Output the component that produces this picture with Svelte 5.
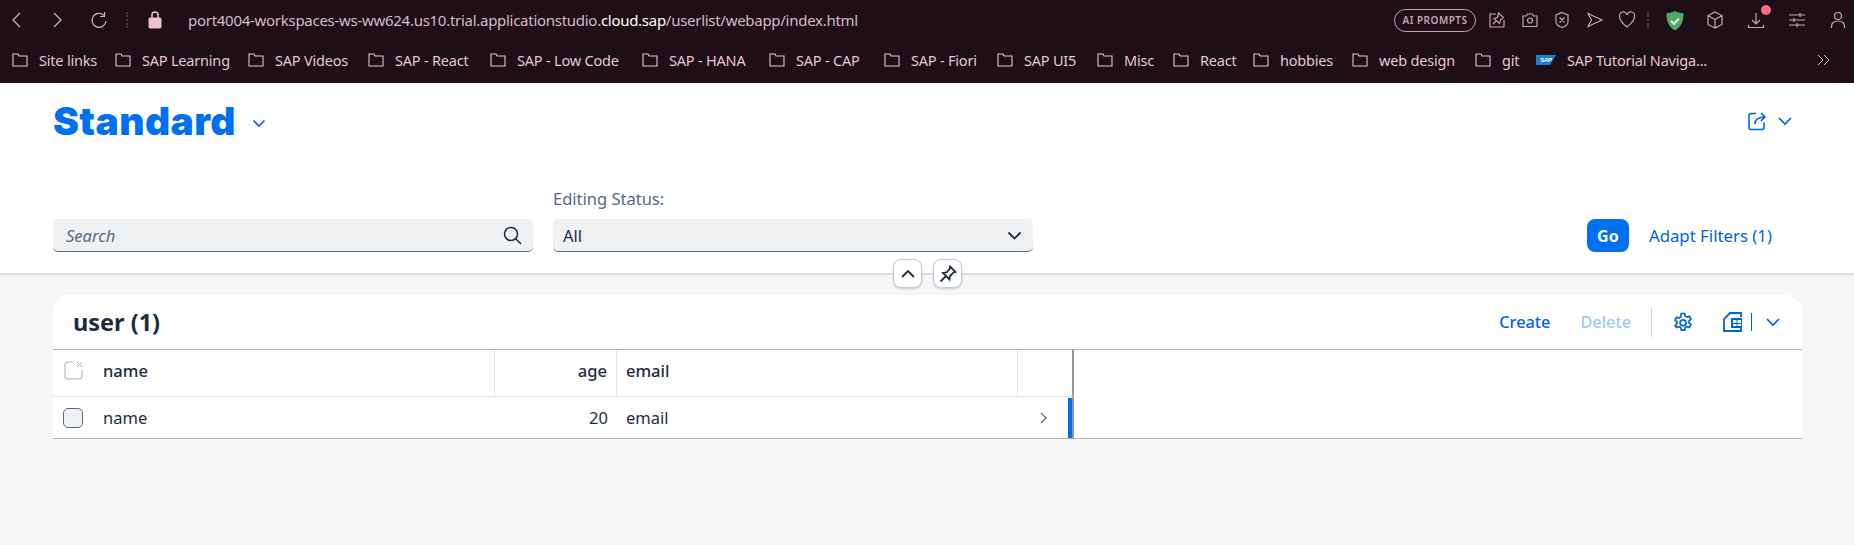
<script>
  const bookmarks = [
    ['Site links', 103], ['SAP Learning', 133], ['SAP Videos', 120], ['SAP - React', 122], ['SAP - Low Code', 152],
    ['SAP - HANA', 127], ['SAP - CAP', 115], ['SAP - Fiori', 113], ['SAP UI5', 100], ['Misc', 76], ['React', 80],
    ['hobbies', 99], ['web design', 123]
  ];
</script>

<div class="page">
  <div class="browser">
    <div class="addr">
      <svg class="nav first" width="18" height="18" viewBox="0 0 18 18"><path d="M12 2 5 9l7 7"/></svg>
      <svg class="nav second" width="18" height="18" viewBox="0 0 18 18"><path d="M6 2l7 7-7 7"/></svg>
      <svg class="nav third" width="20" height="20" viewBox="0 0 20 20"><path d="M15.500 6A7 7 0 1 0 17 11M15.500 2v4.500h-4.500"/></svg>
      <i class="dots"></i>
      <svg class="lock" width="14" height="18" viewBox="0 0 14 18"><rect x="1" y="7" width="12" height="10" rx="1" fill="#f0bfd0"/><path d="M4 7V4a3 3 0 0 1 6 0V7" fill="none" stroke="#f0bfd0" stroke-width="1.500"/></svg>
      <span class="url">port4004-workspaces-ws-ww624.us10.trial.applicationstudio.<b>cloud.sap</b>/userlist/webapp/index.html</span>
      <span class="grow"></span>
      <span class="ai">AI PROMPTS</span>
      <div class="tools one">
        <svg width="18" height="18" viewBox="0 0 18 18"><path d="M8 3H2v13h14V9M10.500 2l5 4.500-3 2.500-1 3.500-5.500-5 3.500-1zM5 13l3-3"/></svg>
        <svg width="18" height="18" viewBox="0 0 18 18"><path d="M2 5h3.500l1-2h5l1 2H16v10.500H2z"/><circle cx="9" cy="9.500" r="2.500"/></svg>
        <svg width="18" height="18" viewBox="0 0 18 18"><path d="M9 1.500l6 2.500v7c0 2.500-3 4.500-6 5.500-3-1-6-3-6-5.500V4zM6.500 6.500l5 5M11.500 6.500l-5 5"/></svg>
        <svg width="18" height="18" viewBox="0 0 18 18"><path d="M2 2.500l14 6.500-14 6.500 3.500-6.500z"/></svg>
        <svg width="18" height="18" viewBox="0 0 18 18"><path d="M9 16C4 12 1.500 9 1.500 5.500a3.700 3.700 0 0 1 7.500-1.500 3.700 3.700 0 0 1 7.500 1.500C16.500 9 14 12 9 16z"/></svg>
      </div>
      <i class="dots tdots"></i>
      <svg class="shield" width="20" height="21" viewBox="0 0 20 22"><path d="M10 1c3 1.500 6 2 9 2.500 0 8-2 14-9 18C3 17.500 1 11.500 1 3.500c3-.5 6-1 9-2.500z" fill="#51a861"/><path d="M6 11.500l3 3 5-5.500" fill="none" stroke="#fff" stroke-width="2"/></svg>
      <div class="tools two">
        <svg width="18" height="20" viewBox="0 0 18 20"><path d="M9 2l7 3.500v9L9 18l-7-3.500v-9zM2 5.500L9 9.500l7-4M9 9.500V18"/></svg>
        <span class="download">
          <svg width="18" height="20" viewBox="0 0 18 20"><path d="M9 3v11M5 10l4 4 4-4M1.500 15v2.500h15V15"/></svg>
          <em></em>
        </span>
        <svg width="18" height="18" viewBox="0 0 18 18"><path d="M1 4h16M1 9h16M1 14h16M12 2v4M6 7v4M9 12v4"/></svg>
        <svg width="18" height="20" viewBox="0 0 18 20"><circle cx="9" cy="6" r="3.500"/><path d="M2.500 18v-2c0-2.500 2.500-5 6.500-5s6.500 2.500 6.500 5v2"/></svg>
      </div>
    </div>
    <div class="marks">
      {#each bookmarks as [label, w]}
        <span class="mark" style="width:{w}px"><svg width="16" height="14" viewBox="0 0 16 14"><path d="M1 1h5l1 2h8v10H1z"/></svg>{label}</span>
      {/each}
      <span class="mark" style="width:61px"><svg width="16" height="14" viewBox="0 0 16 14"><path d="M1 1h5l1 2h8v10H1z"/></svg>git</span>
      <span class="mark"><i class="sap">SAP</i>SAP Tutorial Naviga...</span>
      <span class="grow"></span>
      <svg class="more" width="13" height="12" viewBox="0 0 13 12"><path d="M1 1l5 5-5 5M7 1l5 5-5 5"/></svg>
    </div>
  </div>

  <header class="head">
    <div class="title-row">
      <h1>Standard</h1>
      <svg class="chev title-chev" width="14" height="14" viewBox="0 0 14 14"><path d="M1.500 4.500l5.500 5.500 5.500-5.500"/></svg>
      <span class="grow"></span>
      <svg class="share" width="20" height="20" viewBox="0 0 20 20"><path d="M9 2.500H4a2 2 0 0 0-2 2v12a2 2 0 0 0 2 2h11a2 2 0 0 0 2-2v-5M8 13c0-4 3-7 10-7M14 2l4 4-4 4"/></svg>
      <svg class="chev" width="14" height="14" viewBox="0 0 14 14"><path d="M1 4l6 6 6-6"/></svg>
    </div>
    <div class="filters">
      <div class="search"><span>Search</span>
        <svg width="19" height="19" viewBox="0 0 19 19"><circle cx="8" cy="8" r="6.500"/><path d="M12.500 12.500l5.500 5.500"/></svg>
      </div>
      <div class="field">
        <label>Editing Status:</label>
        <div class="select"><span>All</span>
          <svg width="15" height="15" viewBox="0 0 15 15"><path d="M1.500 4.500l6 6 6-6"/></svg>
        </div>
      </div>
      <span class="grow"></span>
      <button class="go">Go</button>
      <span class="adapt">Adapt Filters (1)</span>
    </div>
  </header>

  <div class="collapse">
    <span class="round"><svg width="14" height="14" viewBox="0 0 14 14"><path d="M1 10l6-6 6 6"/></svg></span>
    <span class="round"><svg width="18" height="18" viewBox="0 0 18 18"><path d="M11 1.500l5.500 5.500-2 .5-3.500 3.500-.5 3.500L4 8l3.500-.5L10.500 4zM6.500 11.500L1.500 16.500"/></svg></span>
  </div>

  <section class="card">
    <div class="toolbar">
      <h2>user (1)</h2>
      <span class="grow"></span>
      <span class="act">Create</span>
      <span class="act off">Delete</span>
      <i class="sep"></i>
      <svg class="gear" width="20" height="20" viewBox="0 0 20 20"><path d="M8.300 1.500h3.400l.5 2.500 1.700 1 2.400-.8 1.700 2.900-1.900 1.700v2l1.900 1.700-1.700 2.900-2.400-.8-1.700 1-.5 2.500H8.300l-.5-2.500-1.700-1-2.400.8L2 13.500l1.900-1.700v-2L2 8.100l1.700-2.900 2.400.8 1.700-1z"/><circle cx="10" cy="10.800" r="3"/></svg>
      <svg class="export" width="20" height="20" viewBox="0 0 20 20"><path d="M18 5V1H7L1 7v12h17v-3"/><rect x="8" y="6" width="11" height="10" fill="#0064d9" stroke="none"/><path d="M10 8h3.500v3H10zM14.500 8H18v3h-3.500zM10 12h3.500v2H10zM14.500 12H18v2h-3.500z" fill="#fff" stroke="none"/></svg>
      <i class="mini"></i>
      <svg class="chev" width="14" height="14" viewBox="0 0 14 14"><path d="M1 4l6 6 6-6"/></svg>
    </div>
    <div class="table">
      <div class="row hdr">
        <div class="c sel">
          <svg width="19" height="19" viewBox="0 0 19 19"><path d="M9 1H4a3 3 0 0 0-3 3v11a3 3 0 0 0 3 3h11a3 3 0 0 0 3-3V9"/><path class="x" d="M13 1l5 5M18 1l-5 5"/></svg>
        </div>
        <div class="c name">name</div>
        <div class="c age">age</div>
        <div class="c email">email</div>
        <div class="c tail"></div>
      </div>
      <div class="row body">
        <div class="c sel"><i class="check"></i></div>
        <div class="c name">name</div>
        <div class="c age">20</div>
        <div class="c email">email</div>
        <div class="c tail">
          <svg width="10" height="12" viewBox="0 0 10 12"><path d="M2 1l5 5-5 5"/></svg>
          <i class="nav-bar"></i>
        </div>
      </div>
    </div>
  </section>
</div>

<style>
  :global(body) { margin: 0; background: #f5f6f7; }
  .page { width: 1854px; height: 545px; overflow: hidden; background: #f5f6f7; font-family: "Noto Sans", "Liberation Sans", sans-serif; color: #1d2d3e; }
  .grow { flex: 1; }
  svg { fill: none; stroke: currentColor; display: block; flex: none; }

  .browser { height: 83px; background: #1e0e16; color: #e8c6d2; box-sizing: border-box; }
  .addr { height: 40px; display: flex; align-items: center; padding: 0 7px 0 8px; }
  .nav { stroke: #d5b8c3; stroke-width: 1.200; }
  .first { margin-right: 22px; }
  .second { margin-right: 23px; }
  .third { margin-right: 17px; }
  .dots { width: 2px; height: 16px; border-left: 2px dotted #4c3540; flex: none; box-sizing: border-box; }
  .addr > .dots { margin-right: 20px; }
  .lock { margin-right: 24px; }
  .url { font-size: 15px; letter-spacing: -.28px; color: #d9b9c6; white-space: nowrap; margin-left: 2px; }
  .url b { color: #fff; font-weight: 400; }
  .ai { border: 1.500px solid #c9a5b3; border-radius: 12px; font-size: 10px; font-weight: 600; letter-spacing: .5px; color: #c9a5b3; height: 23px; width: 82px; box-sizing: border-box; display: flex; align-items: center; justify-content: center; }
  .tools { display: flex; align-items: center; }
  .tools svg { stroke: #c9a5b3; stroke-width: 1.200; }
  .one { gap: 14.500px; margin-left: 12px; }
  .two { gap: 23px; margin-left: 21px; }
  .addr > .tdots { margin: 0 16px 0 11px; }
  .shield { stroke: none; }
  .download { position: relative; display: block; }
  .download em { position: absolute; top: -5px; right: -6px; width: 10px; height: 10px; border-radius: 50%; background: #ff6b86; }

  .marks { height: 40px; display: flex; align-items: center; padding: 0 0 3px 12px; box-sizing: content-box; font-size: 14.500px; letter-spacing: -.2px; white-space: nowrap; color: #e8c6d2; }
  .mark { display: flex; align-items: center; gap: 11px; flex: none; box-sizing: border-box; }
  .mark svg { stroke: #e8c6d2; stroke-width: 1.100; }
  .sap { display: block; width: 20px; height: 10px; background: #1a7fd0; color: #fff; font: 700 6px/10px "Liberation Sans", sans-serif; text-align: center; clip-path: polygon(0 0, 100% 0, 70% 100%, 0 100%); }
  .more { margin-right: 24px; stroke: #cdb4bf; stroke-width: 1; }

  .head { height: 192px; box-sizing: border-box; background: #fff; border-bottom: 2px solid #dcdee0; padding: 0 53px; display: flex; flex-direction: column; }
  .title-row { display: flex; align-items: center; height: 75px; padding-right: 9px; color: #0070f2; }
  h1 { margin: 0; font-family: Inter, "Noto Sans", sans-serif; font-size: 39px; line-height: 75px; font-weight: 900; color: #0070f2; letter-spacing: .4px; }
  .title-chev { margin: 4px 0 0 16px; stroke: #0064d9; stroke-width: 1.600; }
  .chev { stroke-width: 1.700; stroke: #0064d9; }
  .share { stroke: #0064d9; stroke-width: 1.600; margin-right: 11px; }
  .filters { display: flex; align-items: flex-end; margin-top: 30px; }
  .search, .select { height: 33px; box-sizing: border-box; background: #eff1f2; border-radius: 5px; border-bottom: 1px solid #556b81; display: flex; align-items: center; justify-content: space-between; font-size: 16.500px; }
  .search { width: 480px; padding: 0 11px 0 13px; font-style: italic; color: #556b82; margin-right: 20px; }
  .search svg { stroke: #1d2d3e; stroke-width: 1.500; }
  .field { display: flex; flex-direction: column; }
  label { font-size: 16.500px; color: #556b82; line-height: 22px; margin-bottom: 9px; }
  .select { width: 480px; padding: 0 11px 0 10px; color: #1d2d3e; }
  .select svg { stroke: #1d2d3e; stroke-width: 1.800; }
  .go { width: 42px; height: 33px; border: 0; border-radius: 8px; background: #0070f2; color: #fff; font: 700 16px "Noto Sans", sans-serif; padding: 0; margin-right: 20px; }
  .adapt { font-size: 16.800px; color: #0064d9; line-height: 33px; margin-right: 29px; }

  .collapse { height: 20px; display: flex; justify-content: center; gap: 11px; padding-left: 1px; }
  .round { width: 29px; height: 29px; margin-top: -16px; box-sizing: border-box; background: #fff; border: 1px solid #c4cad0; border-radius: 8px; display: flex; align-items: center; justify-content: center; position: relative; box-shadow: 0 1px 2px rgba(85,107,130,.3); }
  .round svg { stroke: #1d2d3e; stroke-width: 1.800; }

  .card { margin: 0 52px 0 53px; background: #fff; border-radius: 16px 16px 0 0; }
  .toolbar { height: 54px; display: flex; align-items: center; padding: 0 22px 0 20px; border-bottom: 1px solid #a9b4be; color: #0064d9; }
  h2 { margin: 0; font-size: 23.500px; font-weight: 700; color: #1d2d3e; }
  .act { font-size: 16.300px; font-weight: 500; color: #0064d9; margin-right: 30px; }
  .act.off { color: #a3c7f2; margin-right: 20px; }
  .sep { width: 1px; height: 30px; background: #d0d5da; margin-right: 21px; }
  .gear { stroke: #0064d9; stroke-width: 1.700; margin-right: 30px; }
  .export { stroke: #0064d9; stroke-width: 1.800; }
  .mini { width: 1px; height: 18px; background: #0064d9; margin: 0 14px 0 8px; }

  .row { display: grid; grid-template-columns: 37px 405px 122px 401px 54px; width: 1019px; border-right: 2px solid #8e969e; font-size: 16.500px; }
  .hdr { height: 46px; font-weight: 500; color: #1d2d3e; }
  .hdr .name, .hdr .age, .hdr .email, .hdr .sel { padding-bottom: 6px; }
  .body { height: 41px; border-top: 1px solid #e5e5e5; }
  .c { display: flex; align-items: center; min-width: 0; box-sizing: border-box; }
  .hdr .c { border-right: 1px solid #e5e5e5; }
  .hdr .sel, .hdr .tail { border-right: 0; }
  .sel { justify-content: flex-end; padding-right: 7px; }
  .sel svg { stroke: #c6cbd0; stroke-width: 1.600; }
  .sel .x { stroke-width: 1; stroke: #aab2ba; }
  .name { padding-left: 13px; }
  .age { justify-content: flex-end; padding-right: 9px; }
  .email { padding-left: 9px; }
  .tail { position: relative; justify-content: flex-end; padding-right: 23px; }
  .tail svg { stroke: #556b82; stroke-width: 1.200; }
  .check { width: 20px; height: 20px; box-sizing: border-box; background: #eff1f2; border: 1px solid #556b82; border-radius: 5px; display: block; }
  .nav-bar { position: absolute; right: 0; top: 1px; bottom: 0; width: 4px; background: #0070f2; }
  .table { border-bottom: 1px solid #a9b4be; }
</style>
